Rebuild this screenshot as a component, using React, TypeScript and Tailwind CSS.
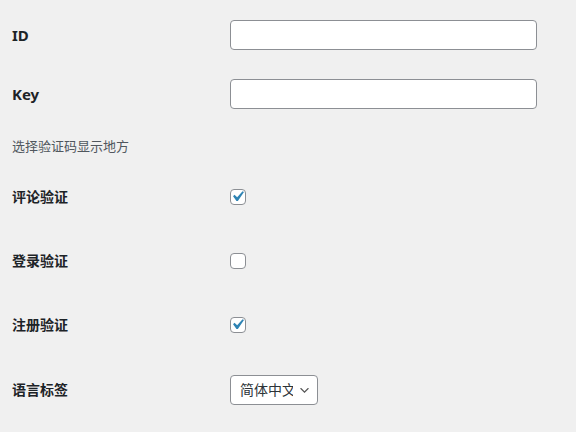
import React from "react";

const font = { fontFamily: '"Noto Sans", "Noto Sans CJK SC", sans-serif' };

function Label({ children, latin }: { children: React.ReactNode; latin?: boolean }) {
  return (
    <div
      className={
        latin
          ? "w-[218px] shrink-0 text-[15px] font-bold leading-[18px] text-[#1d2327]"
          : "w-[218px] shrink-0 text-[14px] font-semibold leading-[18px] text-[#1d2327]"
      }
    >
      {children}
    </div>
  );
}

function TextField() {
  return (
    <input
      type="text"
      className="h-[30px] w-[307px] rounded-[4px] border border-[#8c8f94] bg-white px-2 text-[14px] text-[#2c3338] outline-none"
    />
  );
}

function Checkbox({ checked }: { checked?: boolean }) {
  return (
    <span className="relative block h-4 w-4 rounded-[4px] border border-[#8c8f94] bg-white">
      {checked && (
        <svg
          viewBox="0 0 20 20"
          className="absolute left-[-4px] top-[-4px] h-[21px] w-[21px]"
        >
          <path
            fill="#2f84b4"
            d="M14.83 4.89l1.34.94-5.81 8.38H9.02L5.78 9.67l1.34-1.25 2.57 2.4z"
          />
        </svg>
      )}
    </span>
  );
}

export default function App() {
  return (
    <div className="min-h-[432px] bg-[#f0f0f0] pl-3" style={font}>
      <div className="flex flex-col">
        <div className="mt-[20px] flex h-[30px] items-center">
          <Label latin>ID</Label>
          <TextField />
        </div>
        <div className="mt-[29px] flex h-[30px] items-center">
          <Label latin>Key</Label>
          <TextField />
        </div>
        <div className="mt-[27px] h-[20px] text-[13px] leading-[20px] text-[#50575e]">
          选择验证码显示地方
        </div>
        <div className="mt-[33px] flex h-[16px] items-center">
          <Label>评论验证</Label>
          <Checkbox checked />
        </div>
        <div className="mt-[48px] flex h-[16px] items-center">
          <Label>登录验证</Label>
          <Checkbox />
        </div>
        <div className="mt-[48px] flex h-[16px] items-center">
          <Label>注册验证</Label>
          <Checkbox checked />
        </div>
        <div className="mt-[42px] flex h-[30px] items-center">
          <Label>语言标签</Label>
          <div className="relative h-[30px] w-[88px]">
            <select
              defaultValue="zh"
              className="h-[30px] w-[88px] appearance-none rounded-[4px] border border-[#8c8f94] bg-white pl-[9px] pr-6 text-[14px] leading-[28px] text-[#2c3338] outline-none"
              style={font}
            >
              <option value="zh">简体中文</option>
            </select>
            <svg
              viewBox="0 0 20 20"
              className="pointer-events-none absolute right-[7px] top-[9px] h-[13px] w-[13px]"
            >
              <path fill="#555" d="M5 6l5 5 5-5 2 1-7 7-7-7 2-1z" />
            </svg>
          </div>
        </div>
      </div>
    </div>
  );
}
